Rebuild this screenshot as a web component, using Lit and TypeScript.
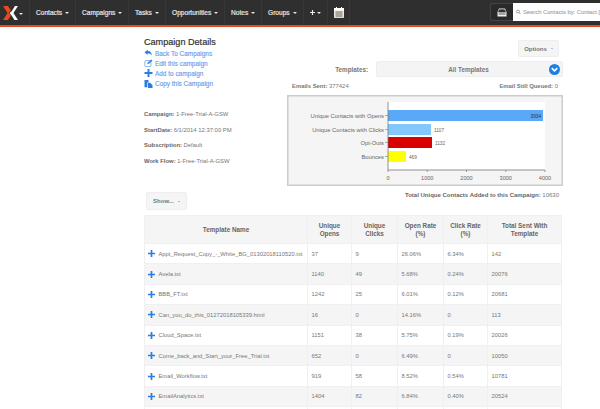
import { LitElement, html, css, svg } from "lit";
import { customElement } from "lit/decorators.js";

const NAV: [string, number][] = [["Contacts", 46], ["Campaigns", 53], ["Tasks", 37], ["Opportunities", 59], ["Notes", 37], ["Groups", 42]];
const ROWS = [
  ["Appt_Request_Copy_-_White_BG_01302018110520.txt", "37", "9", "26.06%", "6.34%", "142"],
  ["Avela.txt", "1140", "49", "5.68%", "0.24%", "20076"],
  ["BBB_FT.txt", "1242", "25", "6.01%", "0.12%", "20681"],
  ["Can_you_do_this_01272018105339.html", "16", "0", "14.16%", "0", "113"],
  ["Cloud_Space.txt", "1151", "38", "5.75%", "0.19%", "20026"],
  ["Come_back_and_Start_your_Free_Trial.txt", "652", "0", "6.49%", "0", "10050"],
  ["Email_Workflow.txt", "919", "58", "8.52%", "0.54%", "10781"],
  ["EmailAnalytics.txt", "1404", "82", "6.84%", "0.40%", "20524"],
  ["", "", "", "", "", ""],
];
const BARS = [
  { label: "Unique Contacts with Opens", v: "3934", y: 15, w: 155, c: "#5aa9f8", inside: true },
  { label: "Unique Contacts with Clicks", v: "1107", y: 29, w: 43, c: "#82c8fa", inside: false },
  { label: "Opt-Outs", v: "1132", y: 42, w: 44, c: "#d90000", inside: false },
  { label: "Bounces", v: "469", y: 56, w: 18, c: "#ffff00", inside: false },
];

@customElement("app-root")
export class AppRoot extends LitElement {
  static styles = css`
    :host { display: block; width: 600px; height: 409px; overflow: hidden; background: #fff; font-family: "Liberation Sans", Arial, sans-serif; color: #666; }
    .hdr { height: 25px; background: #2f2f2f; border-bottom: 2px solid #e8491d; display: flex; align-items: center; }
    .logo { width: 30px; height: 25px; display: flex; align-items: center; padding-left: 3px; box-sizing: border-box; gap: 1px; border-right: 1px solid #383838; flex: none; }
    .nav { display: flex; align-items: center; height: 25px; border-right: 1px solid #383838; color: #e4e4e4; font-size: 6.6px; font-weight: 400; -webkit-text-stroke: 0.2px #e4e4e4; padding-left: 6px; box-sizing: border-box; flex: none; white-space: nowrap; }
    .caret { display: inline-block; margin-left: 3px; border-left: 2px solid transparent; border-right: 2px solid transparent; border-top: 2px solid #e8e8e8; }
    .spacer { flex: 1; }
    .search { display: flex; height: 18px; margin-top: -1px; }
    .sbtn { width: 23px; border: 1px solid #444; border-right: 0; border-radius: 3px 0 0 3px; display: flex; align-items: center; justify-content: center; box-sizing: border-box; background: #2a2a2a; }
    .sinput { width: 87px; background: #fff; display: flex; align-items: center; gap: 2px; padding-left: 3px; box-sizing: border-box; color: #aaa; font-size: 5.8px; -webkit-text-stroke: 0.15px #aaa; white-space: nowrap; overflow: hidden; }
    .main { padding-left: 144px; width: 419px; }
    .top { display: grid; grid-template-columns: 143px 276px; }
    h1 { margin: 9px 0 0; font-size: 9.1px; line-height: 12px; font-weight: 400; color: #333; -webkit-text-stroke: 0.2px #333; }
    .lnk { display: flex; align-items: center; height: 10.2px; gap: 2px; font-size: 6.45px; color: #6d9eeb; -webkit-text-stroke: 0.15px #6d9eeb; white-space: nowrap; }
    .lnk svg { width: 9px; height: 8px; flex: none; }
    .dets { margin-top: 18px; font-size: 5.9px; color: #777; }
    .det { height: 15.4px; display: flex; align-items: center; gap: 1.5px; white-space: nowrap; }
    b { font-weight: 700; color: #666; }
    .right { padding-top: 13px; }
    .opt-wrap { display: flex; justify-content: flex-end; padding-right: 4px; }
    .btn { display: inline-flex; align-items: center; justify-content: center; background: #f5f5f5; border: 1px solid #eee; border-radius: 2px; font-size: 6px; font-weight: 700; color: #777; gap: 4px; box-sizing: border-box; }
    .btn i { border-left: 1.5px solid transparent; border-right: 1.5px solid transparent; border-top: 1.5px solid #4a90e2; }
    .opt { width: 41px; height: 17px; }
    .tpl { display: flex; align-items: center; margin-top: 4px; height: 16px; font-size: 6.3px; font-weight: 700; color: #777; }
    .tpl-l { width: 81px; text-align: right; flex: none; }
    .sel { margin-left: 8px; width: 187px; height: 16px; background: #f4f4f4; border: 1px solid #eee; border-radius: 2px; box-sizing: border-box; display: flex; align-items: center; justify-content: center; position: relative; padding-right: 2px; }
    .sel svg { position: absolute; right: 2px; top: 2px; width: 11px; height: 11px; }
    .stats { display: flex; justify-content: space-between; margin-top: 5px; height: 9px; line-height: 9px; font-size: 5.9px; padding: 0 5px; font-weight: 700; color: #777; }
    .stats span span { font-weight: 400; }
    .chart { margin-top: 4px; display: block; width: 276px; height: 91px; }
    .total { text-align: right; padding-right: 4px; margin-top: 5px; line-height: 9px; font-size: 6px; font-weight: 700; color: #666; }
    .total span { font-weight: 400; color: #777; }
    .show { width: 41px; height: 18px; margin: -8px 0 0 2px; display: flex; }
    table { margin-top: 5px; width: 417px; border-collapse: collapse; table-layout: fixed; font-size: 5.8px; color: #777; }
    th { height: 28px; padding: 0 4px; background: #f5f5f5; border: 1px solid #f0f0f0; font-size: 6.35px; line-height: 7.5px; color: #666; font-weight: 700; box-sizing: border-box; }
    td { height: 20.4px; padding: 0 3.5px; border: 1px solid #f0f0f0; box-sizing: border-box; white-space: nowrap; overflow: hidden; }
    tbody tr:nth-child(even) td { background: #f5f5f5; }
    .nm { display: flex; align-items: center; gap: 3.5px; padding-left: 1px; }
    .nm svg { width: 7px; height: 7px; flex: none; }
    td:first-child { padding-left: 2px; padding-right: 0; }
  `;

  private plus(c = "#2a7de1") {
    return html`<svg viewBox="0 0 10 10"><path d="M3.8 0h2.4v3.8H10v2.4H6.2V10H3.8V6.2H0V3.8h3.8z" fill=${c}></path></svg>`;
  }

  private chart() {
    const ticks = [0, 1000, 2000, 3000, 4000];
    return html`<svg class="chart" viewBox="0 0 276 91" font-family="'Liberation Sans', Arial, sans-serif">
      <rect x="0.75" y="0.75" width="274.5" height="89.5" fill="#f5f5f5" stroke="#ccc" stroke-width="1.5"></rect>
      <rect x="101" y="7" width="157" height="68" fill="#fff"></rect>
      ${BARS.map((b) => svg`
        <rect x="101" y=${b.y} width=${b.w} height="11" fill=${b.c}></rect>
        <line x1="98" x2="101" y1=${b.y + 5.5} y2=${b.y + 5.5} stroke="#888" stroke-width="0.7"></line>
        <text x="97" y=${b.y + 7.6} text-anchor="end" font-size="5.8" fill="#666">${b.label}</text>
        <text x=${b.inside ? 101 + b.w - 2 : 101 + b.w + 3} y=${b.y + 7.5} text-anchor=${b.inside ? "end" : "start"} font-size="4.7" fill=${b.inside ? "#333" : "#666"}>${b.v}</text>
      `)}
      <line x1="101" x2="101" y1="7" y2="75" stroke="#777" stroke-width="0.8"></line>
      <line x1="101" x2="258" y1="75" y2="75" stroke="#777" stroke-width="0.8"></line>
      ${ticks.map((t, i) => svg`
        <line x1=${101 + i * 39.25} x2=${101 + i * 39.25} y1="75" y2="77" stroke="#777" stroke-width="0.7"></line>
        <text x=${101 + i * 39.25} y="84.5" text-anchor="middle" font-size="5.6" fill="#666">${t}</text>
      `)}
    </svg>`;
  }

  render() {
    return html`
      <div class="hdr">
        <div class="logo">
          <svg width="15" height="14" viewBox="0 0 15 14">
            <path d="M0 0h5l3 4.5L5.5 7 8 9.5 5 14H0l4.6-7z" fill="#e8491d"></path>
            <path d="M8.5 5.5 12 0h3l-4.6 7L15 14h-3.5L8.6 9.5 6.5 7z" fill="#fff"></path>
          </svg>
          <span class="caret" style="margin:3px 0 0 0"></span>
        </div>
        ${NAV.map(([n, w]) => html`<div class="nav" style="width:${w}px">${n}<span class="caret"></span></div>`)}
        <div class="nav" style="width:24px">
          <svg width="5" height="5" viewBox="0 0 10 10"><path d="M3.8 0h2.4v3.8H10v2.4H6.2V10H3.8V6.2H0V3.8h3.800z" fill="#e8e8e8"></path></svg><span class="caret" style="margin-left:2px"></span>
        </div>
        <div class="nav" style="width:22px">
          <svg width="10" height="11" viewBox="0 0 10 11"><rect y="1" width="10" height="10" rx="1" fill="#f2ead8"></rect><rect y="1" width="10" height="2.5" fill="#fff"></rect><path d="M1 5h8M1 7h8M1 9h8M3 4v6.500M5 4v6.500M7 4v6.500" stroke="#666" stroke-width=".6"></path><path d="M2.500 0v2M7.500 0v2" stroke="#fff"></path></svg>
        </div>
        <div class="spacer"></div>
        <div class="search">
          <div class="sbtn"><svg width="10" height="9" viewBox="0 0 10 9"><path d="M2 .5h6L9.500 4v4.500H.5V4z" fill="#eee"></path><path d="M2.500 1.800h5L8.500 4h-7zM1.500 6h7" stroke="#333" stroke-width=".8" fill="#333"></path></svg></div>
          <div class="sinput"><svg width="6" height="6" viewBox="0 0 10 10"><circle cx="4" cy="4" r="3" fill="none" stroke="#888" stroke-width="1.500"></circle><path d="m6 6 3.500 3.500" stroke="#888" stroke-width="1.800"></path></svg>Search Contacts by: Contact [</div>
        </div>
      </div>
      <div class="main">
        <div class="top">
          <div>
            <h1>Campaign Details</h1>
            <div class="lnk"><svg viewBox="0 0 10 10"><path d="M4 1 0 4.200 4 7.500V5.400c2.500 0 4 .8 5 3 .2-3.500-1.500-6-5-6z" fill="#2a7de1"></path></svg>Back To Campaigns</div>
            <div class="lnk"><svg viewBox="0 0 10 10"><rect x=".5" y="2" width="7.500" height="7.500" rx="1" fill="none" stroke="#6d9eeb"></rect><path d="M3.500 6.500 4 4.800 8.500.5 10 2 5.500 6z" fill="#2a7de1"></path></svg>Edit this campaign</div>
            <div class="lnk">${this.plus()}Add to campaign</div>
            <div class="lnk"><svg viewBox="0 0 10 10"><path d="M0 0h5v3H3.500v6H0z" fill="#2a7de1"></path><path d="M4.300 3.500H7L10 6.300V10H4.300z" fill="#2a7de1"></path></svg>Copy this Campaign</div>
            <div class="dets">
              <div class="det"><b>Campaign:</b> 1-Free-Trial-A-GSW</div>
              <div class="det"><b>StartDate:</b> 6/1/2014 12:37:00 PM</div>
              <div class="det"><b>Subscription:</b> Default</div>
              <div class="det"><b>Work Flow:</b> 1-Free-Trial-A-GSW</div>
            </div>
          </div>
          <div class="right">
            <div class="opt-wrap"><div class="btn opt">Options <i></i></div></div>
            <div class="tpl">
              <div class="tpl-l">Templates:</div>
              <div class="sel">All Templates
                <svg viewBox="0 0 12 12"><circle cx="6" cy="6" r="6" fill="#1f7fe0"></circle><path d="m3 4.500 3 3 3-3" fill="none" stroke="#fff" stroke-width="1.800"></path></svg>
              </div>
            </div>
            <div class="stats"><span>Emails Sent: <span>377424</span></span><span>Email Still Queued: <span>0</span></span></div>
            ${this.chart()}
            <div class="total">Total Unique Contacts Added to this Campaign: <span>10630</span></div>
          </div>
        </div>
        <div class="btn show">Show... <i></i></div>
        <table>
          <colgroup><col style="width:163px"><col style="width:44px"><col style="width:46px"><col style="width:46px"><col style="width:44px"><col style="width:74px"></colgroup>
          <thead><tr><th>Template Name</th><th>Unique Opens</th><th>Unique Clicks</th><th>Open Rate (%)</th><th>Click Rate (%)</th><th>Total Sent With Template</th></tr></thead>
          <tbody>
            ${ROWS.map((r) => html`<tr>
              <td>${r[0] ? html`<div class="nm">${this.plus()}${r[0]}</div>` : ""}</td>
              ${r.slice(1).map((c) => html`<td>${c}</td>`)}
            </tr>`)}
          </tbody>
        </table>
      </div>
    `;
  }
}
